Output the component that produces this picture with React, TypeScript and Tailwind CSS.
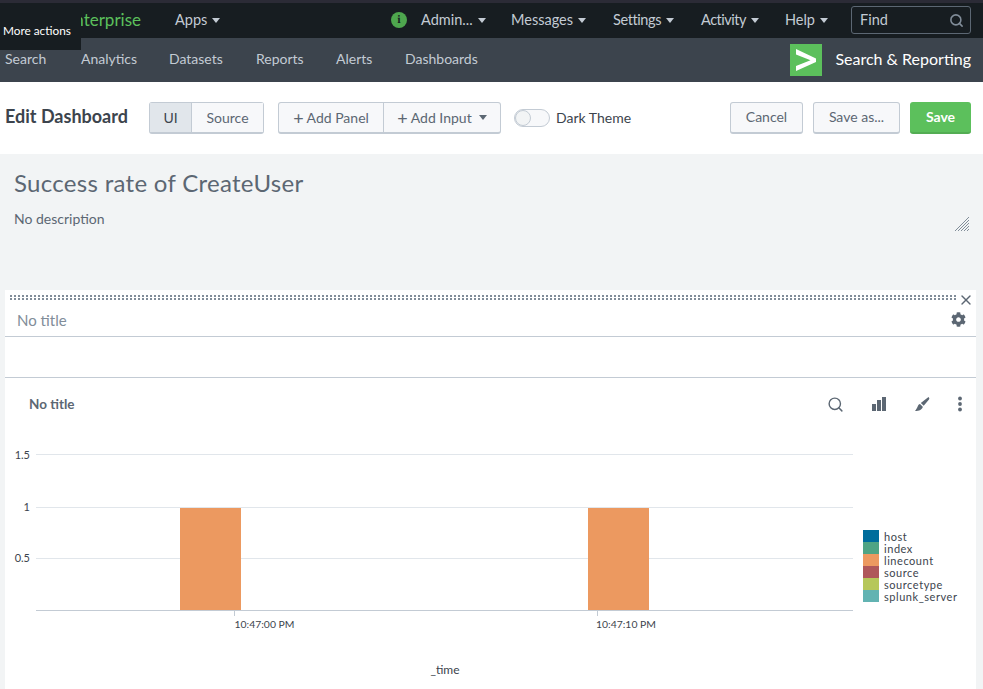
import { Search, X } from 'lucide-react';
import { FaCog } from 'react-icons/fa';

const font = "font-['Lato','Liberation_Sans',sans-serif]";

const Caret = ({ className = 'border-t-[#c3cbd4]' }: { className?: string }) => (
  <span className={`inline-block w-0 h-0 border-x-4 border-x-transparent border-t-[5px] ${className}`} />
);

const TopItem = ({ label, className = '' }: { label: string; className?: string }) => (
  <div className={`flex items-center gap-[5px] ${className}`}>
    <span>{label}</span>
    <Caret />
  </div>
);

const appNav = [
  { label: 'Search', width: 'w-[76px]' },
  { label: 'Analytics', width: 'w-[88px]' },
  { label: 'Datasets', width: 'w-[87px]' },
  { label: 'Reports', width: 'w-[80px]' },
  { label: 'Alerts', width: 'w-[69px]' },
  { label: 'Dashboards', width: 'w-[80px]' },
];

const legend = [
  { name: 'host', color: '#006d9c' },
  { name: 'index', color: '#4fa484' },
  { name: 'linecount', color: '#ec9960' },
  { name: 'source', color: '#af575a' },
  { name: 'sourcetype', color: '#b6c75a' },
  { name: 'splunk_server', color: '#62b3b2' },
];

const Chart = () => (
  <svg width="971" height="259" viewBox="0 0 971 259" className="block" style={{ fontFamily: 'Lato, sans-serif' }}>
    {[454, 507, 558].map((y) => (
      <line key={y} x1="31" x2="848" y1={y - 430 + 0.5} y2={y - 430 + 0.5} stroke="#e1e6eb" />
    ))}
    <line x1="31" x2="848" y1="180.5" y2="180.5" stroke="#c3cbd4" />
    <rect x="175" y="78" width="61" height="102" fill="#ec9960" />
    <rect x="583" y="78" width="61" height="102" fill="#ec9960" />
    <line x1="229.5" x2="229.5" y1="181" y2="186" stroke="#c3cbd4" />
    <line x1="592.5" x2="592.5" y1="181" y2="186" stroke="#c3cbd4" />
    <g fontSize="11" fill="#3c444d" textAnchor="end">
      <text x="25" y="29">1.5</text>
      <text x="25" y="81">1</text>
      <text x="25" y="132">0.5</text>
    </g>
    <g fontSize="10.4" fill="#3c444d" textAnchor="middle">
      <text x="259.5" y="198">10:47:00 PM</text>
      <text x="621" y="198">10:47:10 PM</text>
    </g>
    <text x="440" y="244" fontSize="12" fill="#3c444d" textAnchor="middle">_time</text>
    {legend.map((item, i) => (
      <g key={item.name}>
        <rect x="858" y={100 + i * 12} width="16" height="12" fill={item.color} />
        <text x="879" y={111 + i * 12} fontSize="11" letterSpacing="0.55" fill="#3c444d">{item.name}</text>
      </g>
    ))}
  </svg>
);

export default function App() {
  return (
    <div className={`${font} relative w-[983px] h-[689px] overflow-hidden bg-[#f2f4f5] text-[#3c444d]`}>
      <header className="h-[38px] bg-[#171d21] border-t-[3px] border-[#2b2b36] flex items-center pb-[1px] text-[#c3cbd4] text-[14.5px]">
        <span className="w-[141px] text-right text-[#5cc05c] text-[17px]">enterprise</span>
        <TopItem label="Apps" className="ml-[34px]" />
        <div className="ml-auto mr-3 flex items-center">
          <span className="w-4 h-4 rounded-full bg-[#4ea64e] flex items-center justify-center text-[#171d21] text-[11px] font-bold font-serif">i</span>
          <TopItem label="Admin..." className="ml-[14px] w-[62px]" />
          <TopItem label="Messages" className="ml-[28px]" />
          <TopItem label="Settings" className="ml-[27px] tracking-[-0.4px]" />
          <TopItem label="Activity" className="ml-[27px] tracking-[-0.5px]" />
          <TopItem label="Help" className="ml-[26px]" />
          <div className="ml-[23px] w-[120px] h-[28px] border border-[#5c6773] rounded-[3px] flex items-center justify-between pl-2 pr-[6px]">
            <span>Find</span>
            <Search size={15} strokeWidth={2.5} className="text-[#818d99]" />
          </div>
        </div>
      </header>

      <div className="absolute left-0 top-[3px] w-[81px] h-[47px] bg-[#171d21] text-white text-[11.8px] pl-[3px] pt-[19px] leading-[17px]">
        More actions
      </div>

      <nav className="h-[44px] bg-[#3c444d] flex items-center text-[#c3cbd4] text-sm pr-3">
        <div className="flex pl-[5px] pb-[2px]">
          {appNav.map((item) => (
            <span key={item.label} className={item.width}>{item.label}</span>
          ))}
        </div>
        <div className="ml-auto flex items-center gap-[13px]">
          <svg width="32" height="32" viewBox="0 0 32 32" className="block">
            <rect width="32" height="32" fill="#5cc05c" />
            <path d="M6 5 L26 14.5 V18 L6 27 V22 L20.5 16.2 L6 10.5 Z" fill="#fff" />
          </svg>
          <span className="text-white text-base pb-[2px]">Search &amp; Reporting</span>
        </div>
      </nav>

      <section className="h-[72px] bg-white flex items-center px-[5px] pr-3 text-sm">
        <h1 className="text-[18px] font-bold text-[#3c444d] w-[144px] pb-[3px]">Edit Dashboard</h1>
        <div className="flex h-8 border border-[#c3cbd4] border-b-2 rounded-[3px] text-[#5c6773]">
          <span className="w-[42px] flex items-center justify-center bg-[#e1e6eb] border-r border-[#c3cbd4] text-[#3c444d]">UI</span>
          <span className="w-[71px] flex items-center justify-center bg-[#f7f8fa]">Source</span>
        </div>
        <div className="ml-[14px] flex h-8 border border-[#c3cbd4] border-b-2 rounded-[3px] bg-[#f7f8fa] text-[#5c6773]">
          <span className="w-[105px] flex items-center justify-center gap-[3px] border-r border-[#c3cbd4]">
            <span className="text-[18px] leading-none">+</span> Add Panel
          </span>
          <span className="w-[116px] flex items-center justify-center gap-[3px]">
            <span className="text-[18px] leading-none">+</span> Add Input <Caret className="border-t-[#5c6773] ml-[4px]" />
          </span>
        </div>
        <div className="ml-[13px] flex items-center gap-[6px]">
          <span className="w-9 h-[18px] rounded-full border border-[#c3cbd4] bg-[#f7f8fa] flex">
            <span className="w-4 h-4 rounded-full border border-[#c3cbd4] bg-[#f2f4f5]" />
          </span>
          <span>Dark Theme</span>
        </div>
        <div className="ml-auto flex gap-[10px]">
          <button className="w-[73px] h-8 border border-[#c3cbd4] border-b-2 rounded-[3px] bg-[#f7f8fa] text-[#5c6773] pb-[1px]">Cancel</button>
          <button className="w-[87px] h-8 border border-[#c3cbd4] border-b-2 rounded-[3px] bg-[#f7f8fa] text-[#5c6773] pb-[1px]">Save as...</button>
          <button className="w-[61px] h-8 rounded-[3px] bg-[#5cc05c] border-b-2 border-[#53ad53] text-white font-bold pb-[1px]">Save</button>
        </div>
      </section>

      <section className="relative h-[136px] pl-[14px] pt-4 text-[#5c6773]">
        <h2 className="text-[24px] leading-[26px] tracking-[0.3px] text-[#5c6773]">Success rate of CreateUser</h2>
        <p className="mt-[13px] text-sm">No description</p>
        <svg width="16" height="16" viewBox="0 0 16 16" className="absolute right-[13px] top-[62px]">
          <path d="M1 15 L15 1 M4 15 L15 4 M7 15 L15 7 M10 15 L15 10 M13 15 L15 13" stroke="#818d99" strokeWidth="1" />
        </svg>
      </section>

      <section className="ml-[5px] w-[971px] bg-white">
        <div className="h-[47px] border-b border-[#c3cbd4] relative">
          <div className="absolute left-[5px] w-[947px] top-[5px] flex flex-col gap-[1px]">
            <div className="h-[2px] bg-[repeating-linear-gradient(90deg,#818d99_0_2px,transparent_2px_4px)]" />
            <div className="h-[2px] bg-[repeating-linear-gradient(90deg,#818d99_0_2px,transparent_2px_4px)]" />
          </div>
          <X size={16} strokeWidth={2} className="absolute right-[2px] top-[2px] text-[#5c6773]" />
          <div className="pl-3 pt-5 text-[15px] leading-5 text-[#818d99]">No title</div>
          <FaCog size={15} className="absolute right-[10px] top-[22px] text-[#5c6773]" />
        </div>
        <div className="h-[41px] border-b border-[#c3cbd4]" />
        <div className="h-[52px] flex items-center pl-6 pr-[13px]">
          <span className="text-[13.5px] font-bold text-[#5c6773] pt-[1px]">No title</span>
          <div className="ml-auto flex items-center gap-[27px] text-[#5c6773]">
            <Search size={17} strokeWidth={2} />
            <svg width="16" height="16" viewBox="0 0 16 16" fill="currentColor">
              <rect x="1" y="8" width="4" height="7" />
              <rect x="6" y="4" width="4" height="11" />
              <rect x="11" y="1" width="4" height="14" />
            </svg>
            <svg width="16" height="16" viewBox="0 0 16 16" fill="currentColor">
              <path d="M14.5 1 C15.5 2 15.5 2.5 15 3.5 L9.7 9.8 L6.8 7 Z M6 8 C3.5 8.5 4 11.5 1 15 C5 15 8.5 13.5 8.8 10.7 Z" />
            </svg>
            <svg width="6" height="16" viewBox="0 0 6 16" fill="currentColor">
              <circle cx="3" cy="2.5" r="1.9" />
              <circle cx="3" cy="8" r="1.9" />
              <circle cx="3" cy="13.5" r="1.9" />
            </svg>
          </div>
        </div>
        <Chart />
      </section>
    </div>
  );
}
